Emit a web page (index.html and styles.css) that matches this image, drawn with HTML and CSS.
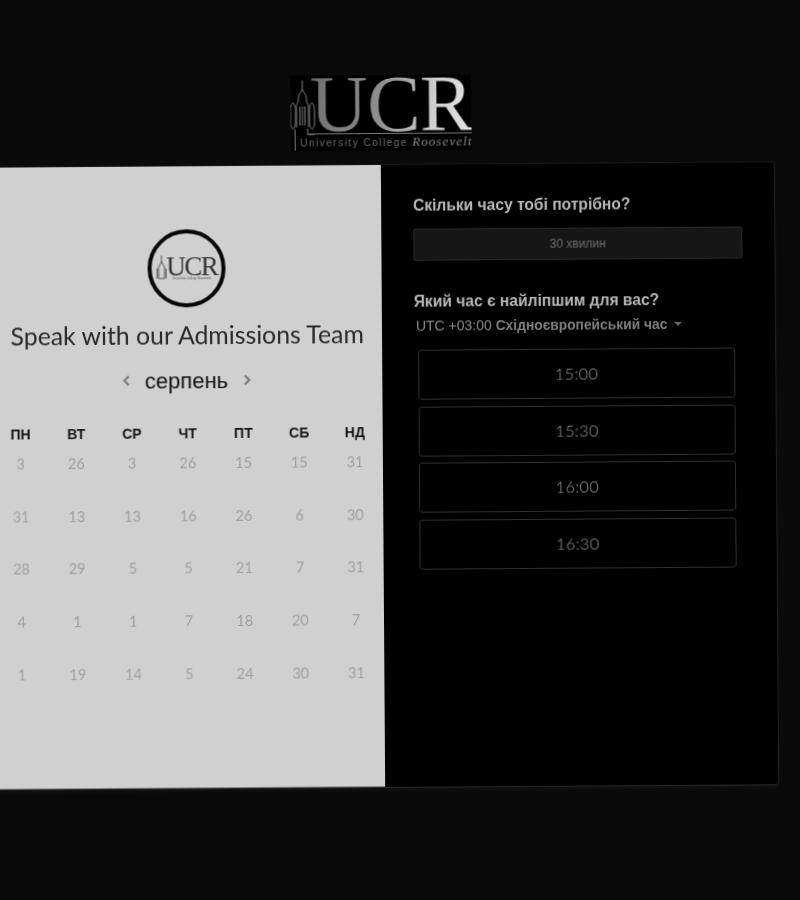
FILE: index.html
```html
<!DOCTYPE html>
<html lang="uk">
<head>
<meta charset="utf-8">
<title>Speak with our Admissions Team</title>
<link rel="stylesheet" href="styles.css">
</head>
<body>
<div class="page">
  <header class="brand">
    <div class="logo">
      <svg class="tower" viewBox="0 0 26 76" fill="none" stroke="#7c7c7c" stroke-width="1">
        <path d="M12 5V14M12 14L8 21V26L6 29V52M12 14L16 21V26L18 29V52"/>
        <path d="M9.5 31V50M12 31V50M14.5 31V50"/>
        <path d="M2.5 27C1 29 0 31 0 34V48C0 51 2.5 54 2.5 54C2.5 54 5 51 5 48V34C5 31 4 29 2.5 27ZM21.5 27C20 29 19 31 19 34V48C19 51 21.5 54 21.5 54C21.5 54 24 51 24 48V34C24 31 23 29 21.5 27Z"/>
        <path d="M4.5 54V75M17 53V59H24"/>
      </svg>
      <div class="logo-mark">UCR</div>
      <div class="logo-rule"></div>
      <div class="logo-tag"><span>University College</span> <em>Roosevelt</em></div>
    </div>
  </header>
  <main class="card">
    <section class="left">
      <div class="badge">
        <svg class="badge-tower" viewBox="0 0 10 26" fill="none" stroke="#555" stroke-width="1"><path d="M5 1V7M5 7L2 13V24H8V13L5 7M0.5 14V24M9.5 14V24"/></svg>
        <div class="badge-text">
          <div class="badge-mark">UCR</div>
          <div class="badge-tag">University College Roosevelt</div>
        </div>
      </div>
      <h1 class="headline">Speak with our Admissions Team</h1>
      <div class="month">
        <svg class="chev" viewBox="0 0 8 12"><path d="M6.5 1.5L2 6L6.5 10.5" fill="none" stroke="#777" stroke-width="2"/></svg>
        <span class="month-name">серпень</span>
        <svg class="chev" viewBox="0 0 8 12"><path d="M1.5 1.5L6 6L1.5 10.5" fill="none" stroke="#777" stroke-width="2"/></svg>
      </div>
      <div class="cal">
        <div class="dow">ПН</div><div class="dow">ВТ</div><div class="dow">СР</div><div class="dow">ЧТ</div><div class="dow">ПТ</div><div class="dow">СБ</div><div class="dow">НД</div>
        <div class="day">3</div><div class="day">26</div><div class="day">3</div><div class="day">26</div><div class="day">15</div><div class="day">15</div><div class="day">31</div>
        <div class="day">31</div><div class="day">13</div><div class="day">13</div><div class="day">16</div><div class="day">26</div><div class="day">6</div><div class="day">30</div>
        <div class="day">28</div><div class="day">29</div><div class="day">5</div><div class="day">5</div><div class="day">21</div><div class="day">7</div><div class="day">31</div>
        <div class="day">4</div><div class="day">1</div><div class="day">1</div><div class="day">7</div><div class="day">18</div><div class="day">20</div><div class="day">7</div>
        <div class="day">1</div><div class="day">19</div><div class="day">14</div><div class="day">5</div><div class="day">24</div><div class="day">30</div><div class="day">31</div>
      </div>
    </section>
    <section class="right">
      <h2 class="q">Скільки часу тобі потрібно?</h2>
      <div class="duration">30 хвилин</div>
      <h2 class="q q2">Який час є найліпшим для вас?</h2>
      <div class="tz">UTC +03:00 <b>Східноєвропейський час</b><span class="caret"></span></div>
      <div class="slots">
        <div class="slot">15:00</div>
        <div class="slot">15:30</div>
        <div class="slot">16:00</div>
        <div class="slot">16:30</div>
      </div>
    </section>
  </main>
</div>
</body>
</html>
```

FILE: styles.css
```css
html, body {
  margin: 0;
  height: 900px;
  overflow: hidden;
  background: #0a0a0a;
}
.page {
  width: 781px;
  margin-left: -5px;
  padding-top: 75px;
  transform: rotate(-0.4deg);
  transform-origin: 385px 475px;
  filter: blur(0.35px);
  font-family: "Liberation Sans", Arial, sans-serif;
}
.brand {
  display: flex;
  justify-content: center;
  padding-right: 5px;
  height: 90px;
}
.logo {
  position: relative;
  width: 161px;
  height: 76px;
  padding-left: 20px;
  background: #000;
}
.tower {
  position: absolute;
  left: 0;
  top: 0;
  width: 26px;
  height: 76px;
}
.logo-mark {
  font-family: "Liberation Serif", serif;
  font-size: 80px;
  line-height: 58px;
  height: 58px;
  margin-top: -1px;
  padding-top: 1px;
  letter-spacing: -0.6px;
  background: linear-gradient(100deg, #6f6f6f 0%, #8f8f8f 45%, #cfcfcf 75%, #e4e4e4 100%);
  -webkit-background-clip: text;
  background-clip: text;
  color: transparent;
}
.logo-rule {
  height: 1px;
  margin: 0 0 0 -3px;
  background: #777;
}
.logo-tag {
  margin: 1px 0 0 -10px;
  white-space: nowrap;
  font-size: 10px;
  line-height: 14px;
  letter-spacing: 1.5px;
  color: #6d6d6d;
}
.logo-tag em {
  font-family: "Liberation Serif", serif;
  font-size: 13px;
  letter-spacing: 1.1px;
  color: #8a8a8a;
}
.card {
  display: flex;
  height: 622px;
  border-radius: 0 3px 3px 0;
  box-shadow: 1px 0 0 #1e1e1e, 0 1px 0 #262626, 0 -1px 0 #181818, 0 2px 5px rgba(60, 60, 60, 0.18);
}
.left {
  width: 388.4px;
  flex: none;
  display: flex;
  flex-direction: column;
  align-items: center;
  background: #d0d0d0;
  box-sizing: border-box;
  padding-top: 63px;
  border-bottom: 1px solid #8a8a8a;
}
.badge {
  width: 78px;
  height: 78px;
  margin-left: -2px;
  box-sizing: border-box;
  border: 4px solid #060606;
  border-radius: 50%;
  display: flex;
  align-items: center;
  justify-content: center;
}
.badge-tower {
  width: 10px;
  height: 26px;
  margin-top: -2px;
}
.badge-text {
  display: flex;
  flex-direction: column;
  align-items: center;
}
.badge-mark {
  font-family: "Liberation Serif", serif;
  font-size: 27px;
  line-height: 20px;
  letter-spacing: -1.5px;
  color: #333;
}
.badge-tag {
  font-size: 3px;
  line-height: 4px;
  color: #555;
  white-space: nowrap;
}
.headline {
  margin: 11px 0 0 -2px;
  font-family: Lato, sans-serif;
  font-size: 24.8px;
  line-height: 34px;
  font-weight: 400;
  color: #2a2a2a;
  white-space: nowrap;
}
.month {
  display: flex;
  align-items: center;
  gap: 15px;
  margin: 12px 0 0 -4px;
  height: 34px;
}
.month-name {
  font-size: 22px;
  color: #0e0e0e;
}
.chev {
  width: 8px;
  height: 12px;
  margin-top: -3px;
}
.cal {
  width: 390px;
  margin: 25px 0 0 -2.5px;
  display: grid;
  grid-template-columns: repeat(7, 1fr);
  grid-template-rows: 30px;
  grid-auto-rows: 52.7px;
  justify-items: center;
}
.dow {
  align-self: start;
  font-size: 14px;
  font-weight: 700;
  line-height: 20px;
  color: #141414;
}
.day {
  font-family: Lato, sans-serif;
  font-size: 14.5px;
  line-height: 20px;
  color: #a0a0a0;
}
.right {
  flex: 1;
  box-sizing: border-box;
  padding: 31px 0 0 31.5px;
  background: #000;
  border-radius: 0 3px 3px 0;
}
.q {
  margin: 0;
  font-size: 15.6px;
  line-height: 20px;
  font-weight: 700;
  color: #b9b9b9;
}
.duration {
  width: 329px;
  height: 32px;
  margin-top: 13px;
  box-sizing: border-box;
  border: 1px solid #2a2a2a;
  border-radius: 2px;
  background: #161616;
  color: #6e6e6e;
  font-size: 12px;
  line-height: 30px;
  text-align: center;
}
.q2 {
  margin-top: 31px;
}
.tz {
  margin: 4px 0 0 2px;
  font-size: 14px;
  line-height: 20px;
  color: #8a8a8a;
}
.tz b {
  font-size: 13.8px;
  color: #7e7e7e;
}
.caret {
  display: inline-block;
  margin-left: 7px;
  vertical-align: 3px;
  border-top: 4px solid #6a6a6a;
  border-left: 4px solid transparent;
  border-right: 4px solid transparent;
}
.slots {
  display: flex;
  flex-direction: column;
  gap: 6.5px;
  margin: 13px 0 0 4px;
}
.slot {
  width: 317px;
  height: 50px;
  box-sizing: border-box;
  border: 1px solid #2e2e2e;
  border-radius: 3px;
  color: #9a9a9a;
  font-family: Lato, sans-serif;
  font-weight: 300;
  font-size: 16px;
  letter-spacing: 0.5px;
  line-height: 48px;
  text-align: center;
}
```
